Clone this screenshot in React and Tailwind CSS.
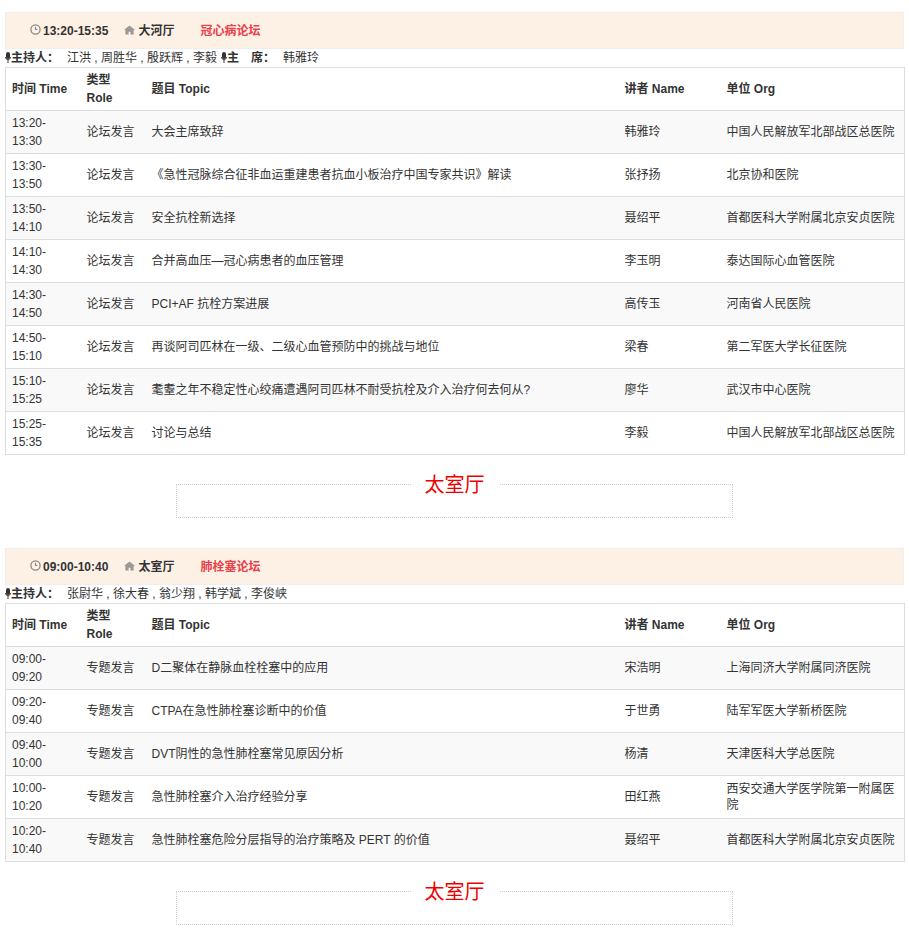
const s1 = {
  time: "13:20-15:35", hall: "大河厅", title: "冠心病论坛",
  hosts: "江洪 , 周胜华 , 殷跃辉 , 李毅", chair: "韩雅玲", role: "论坛发言",
  rows: [
    ["13:20-", "13:30", "大会主席致辞", "韩雅玲", "中国人民解放军北部战区总医院"],
    ["13:30-", "13:50", "《急性冠脉综合征非血运重建患者抗血小板治疗中国专家共识》解读", "张抒扬", "北京协和医院"],
    ["13:50-", "14:10", "安全抗栓新选择", "聂绍平", "首都医科大学附属北京安贞医院"],
    ["14:10-", "14:30", "合并高血压—冠心病患者的血压管理", "李玉明", "泰达国际心血管医院"],
    ["14:30-", "14:50", "PCI+AF 抗栓方案进展", "高传玉", "河南省人民医院"],
    ["14:50-", "15:10", "再谈阿司匹林在一级、二级心血管预防中的挑战与地位", "梁春", "第二军医大学长征医院"],
    ["15:10-", "15:25", "耄耋之年不稳定性心绞痛遭遇阿司匹林不耐受抗栓及介入治疗何去何从?", "廖华", "武汉市中心医院"],
    ["15:25-", "15:35", "讨论与总结", "李毅", "中国人民解放军北部战区总医院"],
  ],
};
const s2 = {
  time: "09:00-10:40", hall: "太室厅", title: "肺栓塞论坛",
  hosts: "张尉华 , 徐大春 , 翁少翔 , 韩学斌 , 李俊峡", role: "专题发言",
  rows: [
    ["09:00-", "09:20", "D二聚体在静脉血栓栓塞中的应用", "宋浩明", "上海同济大学附属同济医院"],
    ["09:20-", "09:40", "CTPA在急性肺栓塞诊断中的价值", "于世勇", "陆军军医大学新桥医院"],
    ["09:40-", "10:00", "DVT阴性的急性肺栓塞常见原因分析", "杨清", "天津医科大学总医院"],
    ["10:00-", "10:20", "急性肺栓塞介入治疗经验分享", "田红燕", "西安交通大学医学院第一附属医院"],
    ["10:20-", "10:40", "急性肺栓塞危险分层指导的治疗策略及 PERT 的价值", "聂绍平", "首都医科大学附属北京安贞医院"],
  ],
};

const Clock = () => (
  <svg width="11" height="11" viewBox="0 0 12 12" className="inline-block mr-[2px] -mt-[2px]">
    <circle cx="6" cy="6" r="5" fill="none" stroke="#888" strokeWidth="1.4" />
    <path d="M6 3v3h2" fill="none" stroke="#888" strokeWidth="1.2" />
  </svg>
);
const Home = () => (
  <svg width="11" height="10" viewBox="0 0 12 10" className="inline-block mr-[3px] -mt-[2px]">
    <path d="M6 0L0 5h1.5v5h3.5V7h2v3h3.5V5H12z" fill="#999" />
  </svg>
);
const Mic = () => (
  <svg width="6" height="11" viewBox="0 0 6 11" className="inline-block -mt-[2px]">
    <rect x="1" y="0" width="4" height="7" rx="2" fill="#333" />
    <path d="M0.5 5a2.5 2.5 0 005 0M3 8v3" fill="none" stroke="#333" strokeWidth="1" />
  </svg>
);

function Section({ d }) {
  return (
    <div>
      <div className="mx-[5px] h-[37px] bg-[#fdf1e6] border border-[#eee] flex items-center pl-[24px] text-[12px] font-bold text-[#333]">
        <Clock />
        <span>{d.time}</span>
        <span className="ml-[16px]"><Home />{d.hall}</span>
        <span className="ml-[26px] text-[#e8414a]">{d.title}</span>
      </div>
      <div className="px-[5px] h-[18px] leading-[18px] text-[12px] text-[#333] whitespace-nowrap">
        <Mic /><b>主持人：</b>
        <span className="ml-[8px]">{d.hosts}</span>
        {d.chair && (<><span className="ml-[4px]"><Mic /></span><b>主　席：</b><span className="ml-[8px]">{d.chair}</span></>)}
      </div>
      <table className="mx-[5px] w-[900px] border-collapse border border-[#ddd] text-[12px] text-[#333] table-fixed">
        <colgroup>
          <col className="w-[75px]" /><col className="w-[65px]" /><col className="w-[473px]" /><col className="w-[102px]" /><col />
        </colgroup>
        <thead>
          <tr className="h-[43px] font-bold text-left">
            <th className="px-[6px] font-bold">时间 Time</th>
            <th className="px-[6px] font-bold leading-[18px]">类型<br />Role</th>
            <th className="px-[6px] font-bold">题目 Topic</th>
            <th className="px-[6px] font-bold">讲者 Name</th>
            <th className="px-[6px] font-bold">单位 Org</th>
          </tr>
        </thead>
        <tbody>
          {d.rows.map((r, i) => (
            <tr key={i} className={`h-[43px] border-t border-[#ddd] ${i % 2 === 0 ? "bg-[#f9f9f9]" : "bg-white"}`}>
              <td className="px-[6px] leading-[18px]">{r[0]}<br />{r[1]}</td>
              <td className="px-[6px]">{d.role}</td>
              <td className="px-[6px]">{r[2]}</td>
              <td className="px-[6px]">{r[3]}</td>
              <td className="px-[6px] leading-[16px]">{r[4]}</td>
            </tr>
          ))}
        </tbody>
      </table>
      <div className="flex justify-center pt-[17px] pb-[30px]">
        <fieldset className="w-[557px] h-[46px] border border-dotted border-[#ccc] text-center">
          <legend className="mx-auto px-[14px] text-[20px] text-[#e00] leading-[24px]" style={{ fontFamily: "'Noto Sans CJK SC', sans-serif" }}>太室厅</legend>
        </fieldset>
      </div>
    </div>
  );
}

export default function App() {
  return (
    <div className="pt-[12px] bg-white" style={{ fontFamily: "'Liberation Sans', 'Noto Sans CJK SC', sans-serif" }}>
      <Section d={s1} />
      <Section d={s2} />
    </div>
  );
}
